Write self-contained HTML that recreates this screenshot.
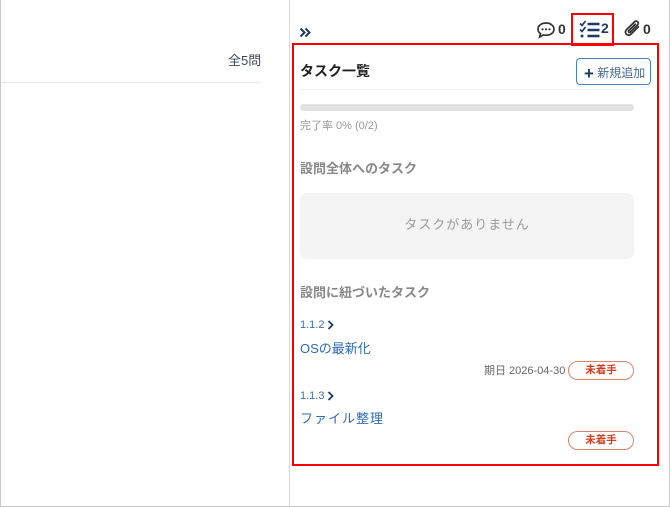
<!DOCTYPE html>
<html><head><meta charset="utf-8"><style>
*{box-sizing:border-box;margin:0;padding:0}
body{width:670px;height:507px;background:#fff;font-family:"Liberation Sans","Noto Sans CJK JP",sans-serif;position:relative;overflow:hidden}
.frame{position:absolute;left:0;top:0;width:670px;height:507px;border:1px solid #c8c8c8;border-top:none}
.abs{position:absolute}
.t{white-space:nowrap}
</style></head><body>
<div class="frame"></div>
<div class="abs t" style="left:228px;top:50px;font-size:13px;color:#3a4a5c">全5問</div>
<div class="abs" style="left:1px;top:82px;width:259px;height:1px;background:#e6e8ec"></div>
<div class="abs" style="left:289px;top:0;width:1px;height:507px;background:#d8d8d8"></div>

<svg class="abs" style="left:299px;top:27px" width="13" height="11" viewBox="0 0 13 11"><path d="M1.5 1.5l4 4-4 4M6.5 1.5l4 4-4 4" fill="none" stroke="#1f3a66" stroke-width="2"/></svg>
<svg class="abs" style="left:536px;top:21px" width="20" height="18" viewBox="0 0 20 18"><path d="M10 2C5.3 2 2 4.8 2 8.2c0 1.8 1 3.3 2.5 4.4L3.6 16l3.8-2.1c.8.2 1.7.3 2.6.3 4.7 0 8-2.8 8-6S14.7 2 10 2z" fill="none" stroke="#333" stroke-width="1.7"/><circle cx="6.5" cy="8.3" r="1.1" fill="#333"/><circle cx="10" cy="8.3" r="1.1" fill="#333"/><circle cx="13.5" cy="8.3" r="1.1" fill="#333"/></svg>
<div class="abs t" style="left:558px;top:21px;font-size:14px;font-weight:bold;color:#333">0</div>
<div class="abs" style="left:571px;top:13px;width:43px;height:33px;border:2.5px solid #f00"></div>
<svg class="abs" style="left:579px;top:20px" width="22" height="19" viewBox="0 0 22 19"><path d="M1 3.5l2 2 3.5-4.5" fill="none" stroke="#1f3a66" stroke-width="1.7"/><path d="M1 9.5l2 2 3.5-4.5" fill="none" stroke="#1f3a66" stroke-width="1.7"/><circle cx="3" cy="16" r="1.5" fill="#1f3a66"/><path d="M8.5 4h12M8.5 10h12M8.5 16h12" stroke="#1f3a66" stroke-width="2.4"/></svg>
<div class="abs t" style="left:601px;top:20px;font-size:14px;font-weight:bold;color:#1f3a66">2</div>
<svg class="abs" style="left:622px;top:19px" width="21" height="21" viewBox="0 0 20 20"><path d="M15.5 7.5l-7 7a3 3 0 01-4.3-4.3L12 2.6a2 2 0 012.9 2.9L7.8 12.6a1 1 0 01-1.4-1.4L12.6 5" fill="none" stroke="#333" stroke-width="1.7" stroke-linecap="round"/></svg>
<div class="abs t" style="left:643px;top:21px;font-size:14px;font-weight:bold;color:#333">0</div>

<div class="abs" style="left:292px;top:43px;width:367px;height:423px;border:2.5px solid #f00"></div>
<div class="abs t" style="left:300px;top:61px;font-size:14px;font-weight:bold;color:#222">タスク一覧</div>
<div class="abs t" style="left:576px;top:58px;width:75px;height:27px;border:1px solid #4a7fc0;border-radius:4px;font-size:12px;color:#4a6a90;padding:5px 0 0 7px"><span style="font-size:17px;font-weight:bold;color:#1f3a66;line-height:12px;vertical-align:-2px">+</span>&nbsp;新規追加</div>
<div class="abs" style="left:300px;top:89px;width:334px;height:1px;background:#eee"></div>
<div class="abs" style="left:300px;top:104px;width:334px;height:7px;background:#e2e2e2;border-radius:4px"></div>
<div class="abs t" style="left:300px;top:117px;font-size:11px;color:#999">完了率 0% (0/2)</div>
<div class="abs t" style="left:300px;top:158px;font-size:13px;font-weight:bold;color:#888">設問全体へのタスク</div>
<div class="abs t" style="left:300px;top:193px;width:334px;height:66px;background:#f4f4f4;border-radius:7px;text-align:center;line-height:64px;font-size:13px;color:#999;letter-spacing:1px">タスクがありません</div>
<div class="abs t" style="left:300px;top:282px;font-size:13px;font-weight:bold;color:#888">設問に紐づいたタスク</div>

<div class="abs t" style="left:300px;top:319px;font-size:11px;color:#3a6fb0">1.1.2</div>
<svg class="abs" style="left:327px;top:320px" width="7" height="10" viewBox="0 0 7 10"><path d="M1.5 1l4 4-4 4" fill="none" stroke="#1f3a66" stroke-width="1.8"/></svg>
<div class="abs t" style="left:300px;top:338px;font-size:13px;color:#2f6cb3">OSの最新化</div>
<div class="abs t" style="left:484px;top:362px;font-size:11px;color:#666">期日 2026-04-30</div>
<div class="abs t" style="left:568px;top:361px;width:66px;height:19px;border:1px solid #e08070;border-radius:10px;font-size:10.5px;font-weight:bold;color:#d04020;text-align:center;line-height:17px;background:#fff">未着手</div>
<div class="abs t" style="left:300px;top:390px;font-size:11px;color:#3a6fb0">1.1.3</div>
<svg class="abs" style="left:327px;top:391px" width="7" height="10" viewBox="0 0 7 10"><path d="M1.5 1l4 4-4 4" fill="none" stroke="#1f3a66" stroke-width="1.8"/></svg>
<div class="abs t" style="left:300px;top:408px;font-size:13px;color:#2f6cb3;letter-spacing:1px">ファイル整理</div>
<div class="abs t" style="left:568px;top:431px;width:66px;height:19px;border:1px solid #e08070;border-radius:10px;font-size:10.5px;font-weight:bold;color:#d04020;text-align:center;line-height:17px">未着手</div>
</body></html>
